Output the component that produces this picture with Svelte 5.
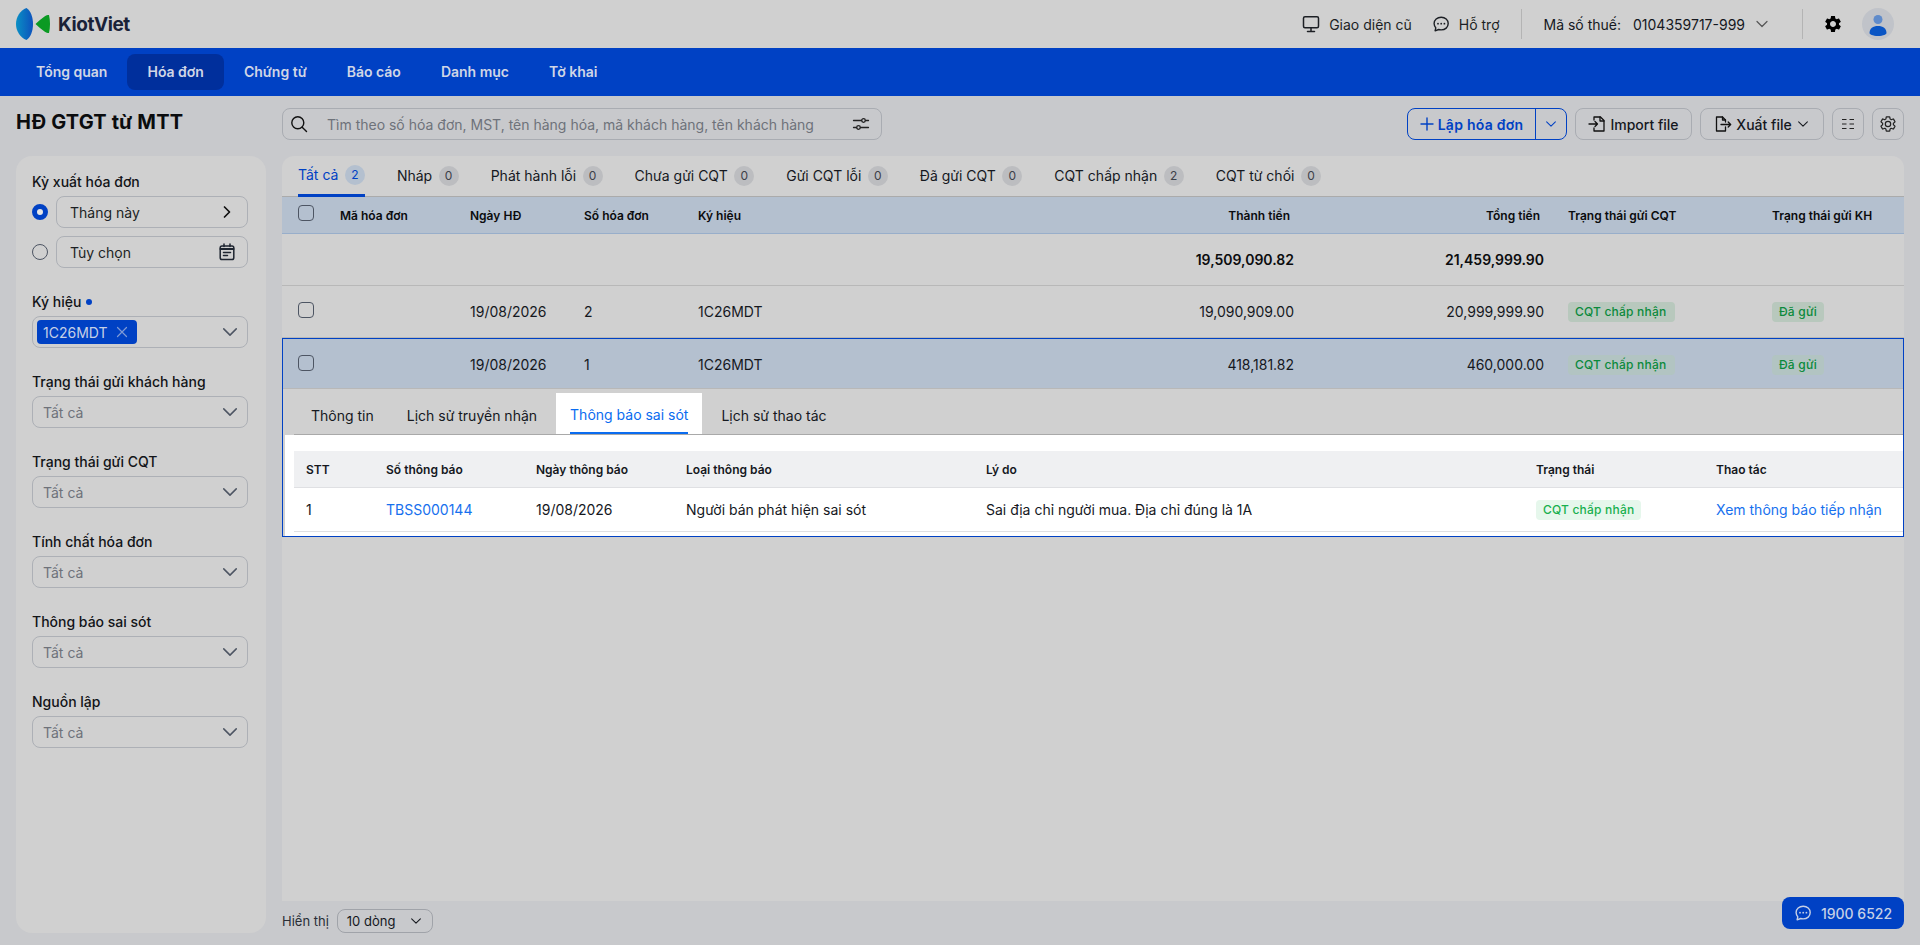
<script lang="ts">
  const navItems = ["Tổng quan", "Hóa đơn", "Chứng từ", "Báo cáo", "Danh mục", "Tờ khai"];
  const statusTabs = [
    { label: "Tất cả", count: 2, active: true },
    { label: "Nháp", count: 0 },
    { label: "Phát hành lỗi", count: 0 },
    { label: "Chưa gửi CQT", count: 0 },
    { label: "Gửi CQT lỗi", count: 0 },
    { label: "Đã gửi CQT", count: 0 },
    { label: "CQT chấp nhận", count: 2 },
    { label: "CQT từ chối", count: 0 }
  ];
  const filters = ["Trạng thái gửi khách hàng", "Trạng thái gửi CQT", "Tính chất hóa đơn", "Thông báo sai sót", "Nguồn lập"];
  const detailTabs = ["Thông tin", "Lịch sử truyền nhận", "Thông báo sai sót", "Lịch sử thao tác"];
  const detailCols = ["STT", "Số thông báo", "Ngày thông báo", "Loại thông báo", "Lý do", "Trạng thái", "Thao tác"];
  const gearPath = "M19.140 12.940c.04-.3.06-.61.06-.94 0-.32-.02-.64-.07-.94l2.030-1.580c.18-.14.23-.41.12-.61l-1.920-3.320c-.12-.22-.37-.29-.59-.22l-2.390.96c-.5-.38-1.030-.7-1.620-.94l-.36-2.540c-.04-.24-.24-.41-.48-.41h-3.840c-.24 0-.43.17-.47.41l-.36 2.540c-.59.24-1.130.57-1.620.94l-2.390-.96c-.22-.08-.47 0-.59.22L2.740 8.870c-.12.21-.08.47.12.61l2.030 1.580c-.05.3-.09.63-.09.94s.02.64.07.94l-2.030 1.580c-.18.14-.23.41-.12.61l1.920 3.320c.12.22.37.29.59.22l2.390-.96c.5.38 1.030.7 1.620.94l.36 2.540c.05.24.24.41.48.41h3.840c.24 0 .44-.17.47-.41l.36-2.540c.59-.24 1.130-.56 1.620-.94l2.390.96c.22.08.47 0 .59-.22l1.920-3.320c.12-.22.07-.47-.12-.61l-2.010-1.580zM12 15.600c-1.980 0-3.600-1.620-3.600-3.600s1.620-3.600 3.600-3.600 3.600 1.620 3.600 3.600-1.620 3.600-3.600 3.600z";
</script>

{#snippet chevron(size = 16)}
  <svg width={size} height={size} viewBox="0 0 16 16" fill="none" stroke="currentColor" stroke-width="1.2" stroke-linecap="round" stroke-linejoin="round"><path d="M3 5.500 8 10.500 13 5.500" /></svg>
{/snippet}

{#snippet chat(size = 18)}
  <svg width={size} height={size} viewBox="0 0 18 18" fill="none" stroke="currentColor" stroke-width="1.4" stroke-linejoin="round"><path d="M9.200 2.200c4 0 7 2.700 7 6.400s-3 6.300-7 6.300c-.9 0-1.800-.1-2.500-.4l-3.600 1.300.7-2.900C2.700 11.500 2.100 10.100 2.100 8.600c0-3.700 3.100-6.400 7.100-6.400z" /><circle cx="6" cy="8.700" r=".9" fill="currentColor" stroke="none" /><circle cx="9.200" cy="8.700" r=".9" fill="currentColor" stroke="none" /><circle cx="12.400" cy="8.700" r=".9" fill="currentColor" stroke="none" /></svg>
{/snippet}

{#snippet checkbox()}
  <span class="checkbox"></span>
{/snippet}

<div class="page">
  <header class="topbar">
    <div class="brand">
      <svg width="34" height="32" viewBox="0 0 34 32">
        <defs>
          <linearGradient id="lens" x1="0" y1="0" x2="1" y2="0">
            <stop offset="0" stop-color="#0a8fc4" />
            <stop offset="1" stop-color="#0d52bd" />
          </linearGradient>
        </defs>
        <path d="M10.500 0C4.200 2.500 0 8.800 0 16s4.200 13.500 10.500 16C14.800 29 17 23 17 16S14.800 3 10.500 0z" fill="url(#lens)" />
        <path d="M33 7c-1.500 0-2.800.4-4.500 1.600C25 11 22 13.500 19.500 16 22 18.500 25 21 28.500 23.400 30.200 24.600 31.500 25 33 25c.7-3 1-6 1-9s-.3-6-1-9z" fill="#0b9a23" />
      </svg>
      <span class="brand-name">KiotViet</span>
    </div>
    <div class="top-actions">
      <span class="top-link">
        <svg width="18" height="18" viewBox="0 0 18 18" fill="none" stroke="currentColor" stroke-width="1.500" stroke-linecap="round"><rect x="1.500" y="1.800" width="15" height="11" rx="1.500" /><path d="M9 13v3M5.500 16.500h7" /></svg>
        Giao diện cũ
      </span>
      <span class="top-link">
        {@render chat(18)}
        Hỗ trợ
      </span>
      <span class="top-divider"></span>
      <span class="tax">
        <span>Mã số thuế:</span>
        <span class="tax-no">0104359717-999</span>
        <span class="tax-chevron">{@render chevron(16)}</span>
      </span>
      <span class="top-divider second"></span>
      <svg class="gear" width="20" height="20" viewBox="0 0 24 24" fill="#000"><path d={gearPath} /></svg>
      <span class="avatar">
        <svg width="32" height="32" viewBox="0 0 32 32"><circle cx="16" cy="11.500" r="4.500" fill="#5f8bcb" /><path d="M7.500 25c0-4.500 3.500-7 8.500-7s8.500 2.500 8.500 7c0 1-3 3-8.500 3s-8.500-2-8.500-3z" fill="#0a55c4" /></svg>
      </span>
    </div>
  </header>

  <nav class="navbar">
    {#each navItems as item, i}
      <span class="nav-item" class:active={i === 1}>{item}</span>
    {/each}
  </nav>

  <main class="content">
    <div class="left-col">
      <h1 class="title">HĐ GTGT từ MTT</h1>
      <aside class="filters">
        <div class="filter">
          <div class="filter-label">Kỳ xuất hóa đơn</div>
          <div class="period">
            <span class="radio checked"></span>
            <div class="field">
              <span>Tháng này</span>
              <svg width="16" height="16" viewBox="0 0 16 16" fill="none" stroke="#111" stroke-width="1.700" stroke-linecap="round" stroke-linejoin="round"><path d="M5.500 3 10.500 8 5.500 13" /></svg>
            </div>
          </div>
          <div class="period">
            <span class="radio"></span>
            <div class="field">
              <span>Tùy chọn</span>
              <svg width="16" height="18" viewBox="0 0 16 18" fill="none" stroke="#1e2530" stroke-width="1.500" stroke-linecap="round"><rect x="1.200" y="3" width="13.600" height="13.500" rx="1.800" /><path d="M5 1v2.500M11 1v2.500" /><path d="M1.500 6h13" stroke-width="2" /><path d="M4.500 9.500h7M4.500 12.500h4" /></svg>
            </div>
          </div>
        </div>

        <div class="filter">
          <div class="filter-label">Ký hiệu <span class="dot"></span></div>
          <div class="field select chips">
            <span class="chip">
              1C26MDT
              <svg width="12" height="12" viewBox="0 0 12 12" fill="none" stroke="#7f9ad6" stroke-width="1.200" stroke-linecap="round"><path d="M1.500 1.500 10.500 10.500M10.500 1.500 1.500 10.500" /></svg>
            </span>
            <span class="field-chevron">{@render chevron(20)}</span>
          </div>
        </div>

        {#each filters as name}
          <div class="filter">
            <div class="filter-label">{name}</div>
            <div class="field select">
              <span class="placeholder">Tất cả</span>
              <span class="field-chevron">{@render chevron(20)}</span>
            </div>
          </div>
        {/each}
      </aside>
    </div>

    <div class="right-col">
      <div class="toolbar">
        <div class="search">
          <svg width="18" height="18" viewBox="0 0 18 18" fill="none" stroke="#111" stroke-width="1.400" stroke-linecap="round"><circle cx="7.800" cy="7.800" r="6" /><path d="M12.200 12.200 16.500 16.500" /></svg>
          <span class="search-text">Tìm theo số hóa đơn, MST, tên hàng hóa, mã khách hàng, tên khách hàng</span>
          <svg width="18" height="18" viewBox="0 0 18 18" fill="none" stroke="#222" stroke-width="1.300" stroke-linecap="round"><path d="M1.500 5.500h8M13.500 5.500h3M1.500 12.500h3M8.500 12.500h8" /><circle cx="11.500" cy="5.500" r="1.800" /><circle cx="6.500" cy="12.500" r="1.800" /></svg>
        </div>
        <div class="actions">
          <div class="split-btn">
            <span class="split-main">
              <svg width="14" height="14" viewBox="0 0 14 14" fill="none" stroke="currentColor" stroke-width="1.400" stroke-linecap="round"><path d="M7 1v12M1 7h12" /></svg>
              Lập hóa đơn
            </span>
            <span class="split-arrow">{@render chevron(14)}</span>
          </div>
          <span class="btn import">
            <svg width="18" height="18" viewBox="0 0 18 18" fill="none" stroke="#111" stroke-width="1.300" stroke-linecap="round" stroke-linejoin="round"><path d="M6 5V2h6.500L16 5.500V16H6v-3" /><path d="M12 2v4h4" /><path d="M1 9h8.500M7 6.500 9.500 9 7 11.500" /></svg>
            Import file
          </span>
          <span class="btn export">
            <svg width="18" height="18" viewBox="0 0 18 18" fill="none" stroke="#111" stroke-width="1.300" stroke-linecap="round" stroke-linejoin="round"><path d="M11.500 12v4H2.500V2h6l3 3v2" /><path d="M8.500 2v3h3" /><path d="M7 9.500h9.500M14.200 7l2.500 2.500-2.500 2.500" /></svg>
            Xuất file
            {@render chevron(14)}
          </span>
          <span class="btn square">
            <svg width="14" height="14" viewBox="0 0 14 14" fill="none" stroke="#222" stroke-width="1.100"><path d="M1 2.500h4.500M8.500 2.500H13M1 7h4.500M8.500 7H13M1 11.500h4.500M8.500 11.500H13" /></svg>
          </span>
          <span class="btn square">
            <svg width="18" height="18" viewBox="0 0 24 24" fill="none" stroke="#222" stroke-width="1.600" stroke-linejoin="round"><path d={gearPath} /></svg>
          </span>
        </div>
      </div>

      <section class="panel">
        <div class="status-tabs">
          {#each statusTabs as tab}
            <span class="status-tab" class:active={tab.active}>
              {tab.label}
              <span class="count">{tab.count}</span>
            </span>
          {/each}
        </div>

        <div class="row head">
          <span>{@render checkbox()}</span>
          <span>Mã hóa đơn</span>
          <span>Ngày HĐ</span>
          <span>Số hóa đơn</span>
          <span>Ký hiệu</span>
          <span class="num">Thành tiền</span>
          <span class="num">Tổng tiền</span>
          <span class="status-col">Trạng thái gửi CQT</span>
          <span>Trạng thái gửi KH</span>
        </div>

        <div class="row body summary">
          <span></span><span></span><span></span><span></span><span></span>
          <span class="num">19,509,090.82</span>
          <span class="num">21,459,999.90</span>
          <span></span><span></span>
        </div>

        <div class="row body plain">
          <span>{@render checkbox()}</span>
          <span></span>
          <span>19/08/2026</span>
          <span>2</span>
          <span>1C26MDT</span>
          <span class="num">19,090,909.00</span>
          <span class="num">20,999,999.90</span>
          <span class="status-col"><span class="badge wide">CQT chấp nhận</span></span>
          <span><span class="badge">Đã gửi</span></span>
        </div>

        <div class="expanded">
          <div class="row body selected">
            <span>{@render checkbox()}</span>
            <span></span>
            <span>19/08/2026</span>
            <span>1</span>
            <span>1C26MDT</span>
            <span class="num">418,181.82</span>
            <span class="num">460,000.00</span>
            <span class="status-col"><span class="badge wide">CQT chấp nhận</span></span>
            <span><span class="badge">Đã gửi</span></span>
          </div>

          <div class="detail-tabs">
            {#each detailTabs as tab, i}
              <span class="detail-tab" class:active={i === 2}><span>{tab}</span></span>
            {/each}
          </div>

          <div class="detail-body">
            <div class="detail-row detail-head">
              {#each detailCols as col}
                <span>{col}</span>
              {/each}
            </div>
            <div class="detail-row detail-item">
              <span>1</span>
              <span class="link">TBSS000144</span>
              <span>19/08/2026</span>
              <span>Người bán phát hiện sai sót</span>
              <span>Sai địa chỉ người mua. Địa chỉ đúng là 1A</span>
              <span><span class="badge light">CQT chấp nhận</span></span>
              <span class="link">Xem thông báo tiếp nhận</span>
            </div>
          </div>
        </div>
      </section>

      <footer class="pager">
        <span>Hiển thị</span>
        <span class="page-size">
          10 dòng
          {@render chevron(14)}
        </span>
      </footer>
    </div>
  </main>

  <div class="hotline">
    {@render chat(18)}
    1900 6522
  </div>
</div>

<style>
  :global(body) {
    font-family: Inter, "Noto Sans", sans-serif;
    font-size: 14px;
    color: #15181e;
    background: #c8c9cc;
  }

  .page {
    position: relative;
    height: 945px;
    overflow: hidden;
    display: flex;
    flex-direction: column;
  }

  .topbar {
    height: 48px;
    background: #d0d0d0;
    display: flex;
    align-items: center;
    justify-content: space-between;
    padding: 0 26px 0 16px;
    flex: none;
  }

  .brand {
    display: flex;
    align-items: center;
    gap: 8px;
  }

  .brand-name {
    font-size: 19px;
    font-weight: 700;
    color: #1a2238;
    letter-spacing: -0.4px;
  }

  .top-actions {
    display: flex;
    align-items: center;
  }

  .top-link {
    display: flex;
    align-items: center;
    gap: 9px;
    margin-right: 20px;
    color: #1c1f24;
  }

  .top-divider {
    width: 1px;
    height: 30px;
    background: #b4b4b4;
    margin-left: 1px;
    margin-right: 22px;
  }

  .top-divider.second {
    margin-left: 32px;
    margin-right: 20px;
  }

  .tax {
    display: flex;
    align-items: center;
  }

  .tax-no {
    margin-left: 12px;
    margin-right: 9px;
  }

  .tax-chevron {
    display: flex;
    color: #555;
  }

  .gear {
    margin-right: 19px;
  }

  .avatar {
    width: 32px;
    height: 32px;
    border-radius: 50%;
    background: #c0c3c9;
    overflow: hidden;
  }

  .navbar {
    height: 48px;
    background: #0041c4;
    display: flex;
    align-items: center;
    padding-left: 16px;
    flex: none;
  }

  .nav-item {
    height: 36px;
    line-height: 36px;
    padding: 0 20px;
    border-radius: 8px;
    font-weight: 600;
    color: #d0d6e6;
  }

  .nav-item.active {
    background: #002f9c;
  }

  .content {
    flex: 1;
    min-height: 0;
    display: grid;
    grid-template-columns: 250px 1fr;
    gap: 16px;
    padding: 12px 16px;
  }

  .left-col,
  .right-col {
    display: flex;
    flex-direction: column;
    min-height: 0;
    min-width: 0;
  }

  .title {
    margin: 0 0 16px;
    height: 32px;
    line-height: 28px;
    font-size: 20px;
    font-weight: 700;
    letter-spacing: 0.15px;
    color: #0b0c0e;
  }

  .filters {
    flex: 1;
    background: #d0d0d0;
    border-radius: 16px;
    padding: 16px 18px 16px 16px;
    display: flex;
    flex-direction: column;
    gap: 24px;
  }

  .filter-label {
    height: 20px;
    line-height: 20px;
    margin-bottom: 4px;
    font-weight: 500;
    color: #121418;
    display: flex;
    align-items: center;
    gap: 5px;
  }

  .dot {
    width: 6px;
    height: 6px;
    border-radius: 50%;
    background: #0041c4;
  }

  .period {
    display: flex;
    align-items: center;
    gap: 8px;
    margin-bottom: 8px;
  }

  .period:last-child {
    margin-bottom: 0;
  }

  .radio {
    width: 16px;
    height: 16px;
    box-sizing: border-box;
    border-radius: 50%;
    border: 1px solid #4d5563;
    flex: none;
  }

  .radio.checked {
    border: 5px solid #0041c4;
    background: #e6e6e6;
  }

  .field {
    flex: 1;
    height: 32px;
    box-sizing: border-box;
    border: 1px solid #adb0b6;
    border-radius: 8px;
    display: flex;
    align-items: center;
    justify-content: space-between;
    padding: 0 12px 0 13px;
    color: #1c1f24;
  }

  .select {
    padding: 0 7px 0 10px;
  }

  .chips {
    padding-left: 4px;
  }

  .chip {
    height: 24px;
    width: 100px;
    box-sizing: border-box;
    padding-left: 6px;
    border-radius: 4px;
    background: #0041c4;
    color: #c6d0e6;
    display: flex;
    align-items: center;
    gap: 8px;
  }

  .placeholder {
    color: #6e727a;
  }

  .field-chevron {
    display: flex;
    color: #4d5563;
  }

  .toolbar {
    height: 32px;
    margin-bottom: 16px;
    display: flex;
    justify-content: space-between;
  }

  .search {
    width: 600px;
    box-sizing: border-box;
    border: 1px solid #a9acb2;
    border-radius: 8px;
    display: flex;
    align-items: center;
    padding: 0 11px 0 7px;
    gap: 14px;
  }

  .search-text {
    flex: 1;
    color: #6e727a;
    padding-left: 5px;
  }

  .actions {
    display: flex;
    gap: 8px;
  }

  .split-btn {
    width: 160px;
    box-sizing: border-box;
    border: 1px solid #0041c4;
    border-radius: 8px;
    color: #0041c4;
    display: flex;
    font-weight: 600;
    letter-spacing: 0.25px;
  }

  .split-main {
    flex: 1;
    display: flex;
    align-items: center;
    justify-content: center;
    gap: 4px;
    border-right: 1px solid #0041c4;
  }

  .split-arrow {
    width: 30px;
    display: flex;
    align-items: center;
    justify-content: center;
  }

  .btn {
    box-sizing: border-box;
    border: 1px solid #a9acb2;
    border-radius: 8px;
    display: flex;
    align-items: center;
    justify-content: center;
    gap: 4px;
    font-weight: 500;
    color: #15181e;
  }

  .import {
    width: 117px;
  }

  .export {
    width: 124px;
  }

  .square {
    width: 32px;
  }

  .panel {
    flex: 1;
    background: #d0d0d0;
    border-radius: 12px 12px 0 0;
    min-height: 0;
  }

  .status-tabs {
    height: 41px;
    box-sizing: border-box;
    border-bottom: 1px solid #ababab;
    display: flex;
    gap: 32px;
    padding: 0 16px;
  }

  .status-tab {
    height: 41px;
    box-sizing: border-box;
    display: flex;
    align-items: center;
    gap: 6.500px;
    padding-bottom: 2px;
    color: #15181e;
  }

  .status-tab.active {
    color: #0041c4;
    border-bottom: 3px solid #0041c4;
    padding-top: 1px;
  }

  .count {
    width: 20px;
    height: 20px;
    border-radius: 50%;
    background: #bcbdc0;
    color: #3c4048;
    font-size: 12px;
    display: flex;
    align-items: center;
    justify-content: center;
  }

  .active .count {
    background: #b4c0cf;
    color: #0041c4;
  }

  .row {
    display: grid;
    grid-template-columns: 58px 130px 114px 114px 302px 294px 250px 228px 1fr;
    align-items: center;
  }

  .row > span:first-child {
    padding-left: 16px;
  }

  .head {
    height: 37px;
    box-sizing: border-box;
    background: #b4c0cf;
    border-bottom: 1px solid #98aeca;
    font-size: 12px;
    font-weight: 600;
    color: #0b0c0e;
  }

  .head .num {
    padding-right: 4px;
  }

  .body {
    height: 52px;
    box-sizing: border-box;
    border-bottom: 1px solid #b8b8b8;
  }

  .summary .num {
    font-weight: 600;
    color: #0b0c0e;
  }

  .num {
    text-align: right;
  }

  .status-col {
    padding-left: 24px;
  }

  .checkbox {
    display: block;
    width: 16px;
    height: 16px;
    box-sizing: border-box;
    border: 1px solid #4d5563;
    border-radius: 4px;
    margin-top: -4px;
  }

  .badge {
    display: inline-block;
    height: 20px;
    line-height: 20px;
    padding: 0 7px;
    border-radius: 4px;
    font-size: 12px;
    font-weight: 500;
    letter-spacing: 0.2px;
    background: #b8c8bd;
    color: #0b8a3c;
    vertical-align: middle;
  }

  .badge.wide {
    min-width: 107px;
    box-sizing: border-box;
  }

  .expanded {
    border: 1px solid #0041c4;
  }

  .selected {
    height: 50px;
    padding-top: 2px;
    background: #b4c0cf;
    grid-template-columns: 57px 130px 114px 114px 302px 294px 250px 228px 1fr;
  }

  .selected .badge {
    background: #b2c4c2;
  }

  .selected > span:first-child {
    padding-left: 15px;
  }

  .detail-tabs {
    height: 46px;
    box-sizing: border-box;
    margin-left: 11px;
    padding: 4px 0 0 3px;
    border-bottom: 1px solid #a9a9a9;
    display: flex;
    gap: 5px;
  }

  .detail-tab {
    padding: 0 14px;
    display: flex;
    color: #15181e;
  }

  .detail-tab span {
    display: flex;
    align-items: center;
    height: 100%;
    box-sizing: border-box;
    padding-top: 3px;
  }

  .detail-tab.active {
    background: #fff;
    color: #0a6cf0;
  }

  .detail-tab.active span {
    border-bottom: 2px solid #0a6cf0;
  }

  .detail-body {
    background: #fff;
    margin-left: 2px;
    padding: 16px 0 4px 9px;
  }

  .detail-row {
    display: grid;
    grid-template-columns: 80px 150px 150px 300px 550px 180px 1fr;
    align-items: center;
  }

  .detail-row > span {
    padding-left: 12px;
  }

  .detail-head {
    height: 36px;
    background: #eff0f2;
    border-bottom: 1px solid #dfe0e3;
    font-size: 12px;
    font-weight: 600;
  }

  .detail-item {
    height: 44px;
    box-sizing: border-box;
    border-bottom: 1px solid #dfe0e3;
  }

  .link {
    color: #1670ee;
  }

  .badge.light {
    background: #e6f7ec;
    color: #18b04f;
  }

  .pager {
    height: 24px;
    margin-top: 8px;
    display: flex;
    align-items: center;
    gap: 8px;
    font-size: 13px;
    color: #2a2e36;
  }

  .page-size {
    width: 96px;
    height: 24px;
    box-sizing: border-box;
    border: 1px solid #a0a3a9;
    border-radius: 8px;
    display: flex;
    align-items: center;
    justify-content: space-between;
    padding: 0 9px;
    color: #15181e;
  }

  .hotline {
    position: absolute;
    right: 16px;
    bottom: 16px;
    width: 122px;
    height: 32px;
    box-sizing: border-box;
    background: #0041c4;
    border-radius: 8px;
    color: #c6d0e6;
    font-weight: 500;
    display: flex;
    align-items: center;
    justify-content: center;
    gap: 9px;
  }
</style>
